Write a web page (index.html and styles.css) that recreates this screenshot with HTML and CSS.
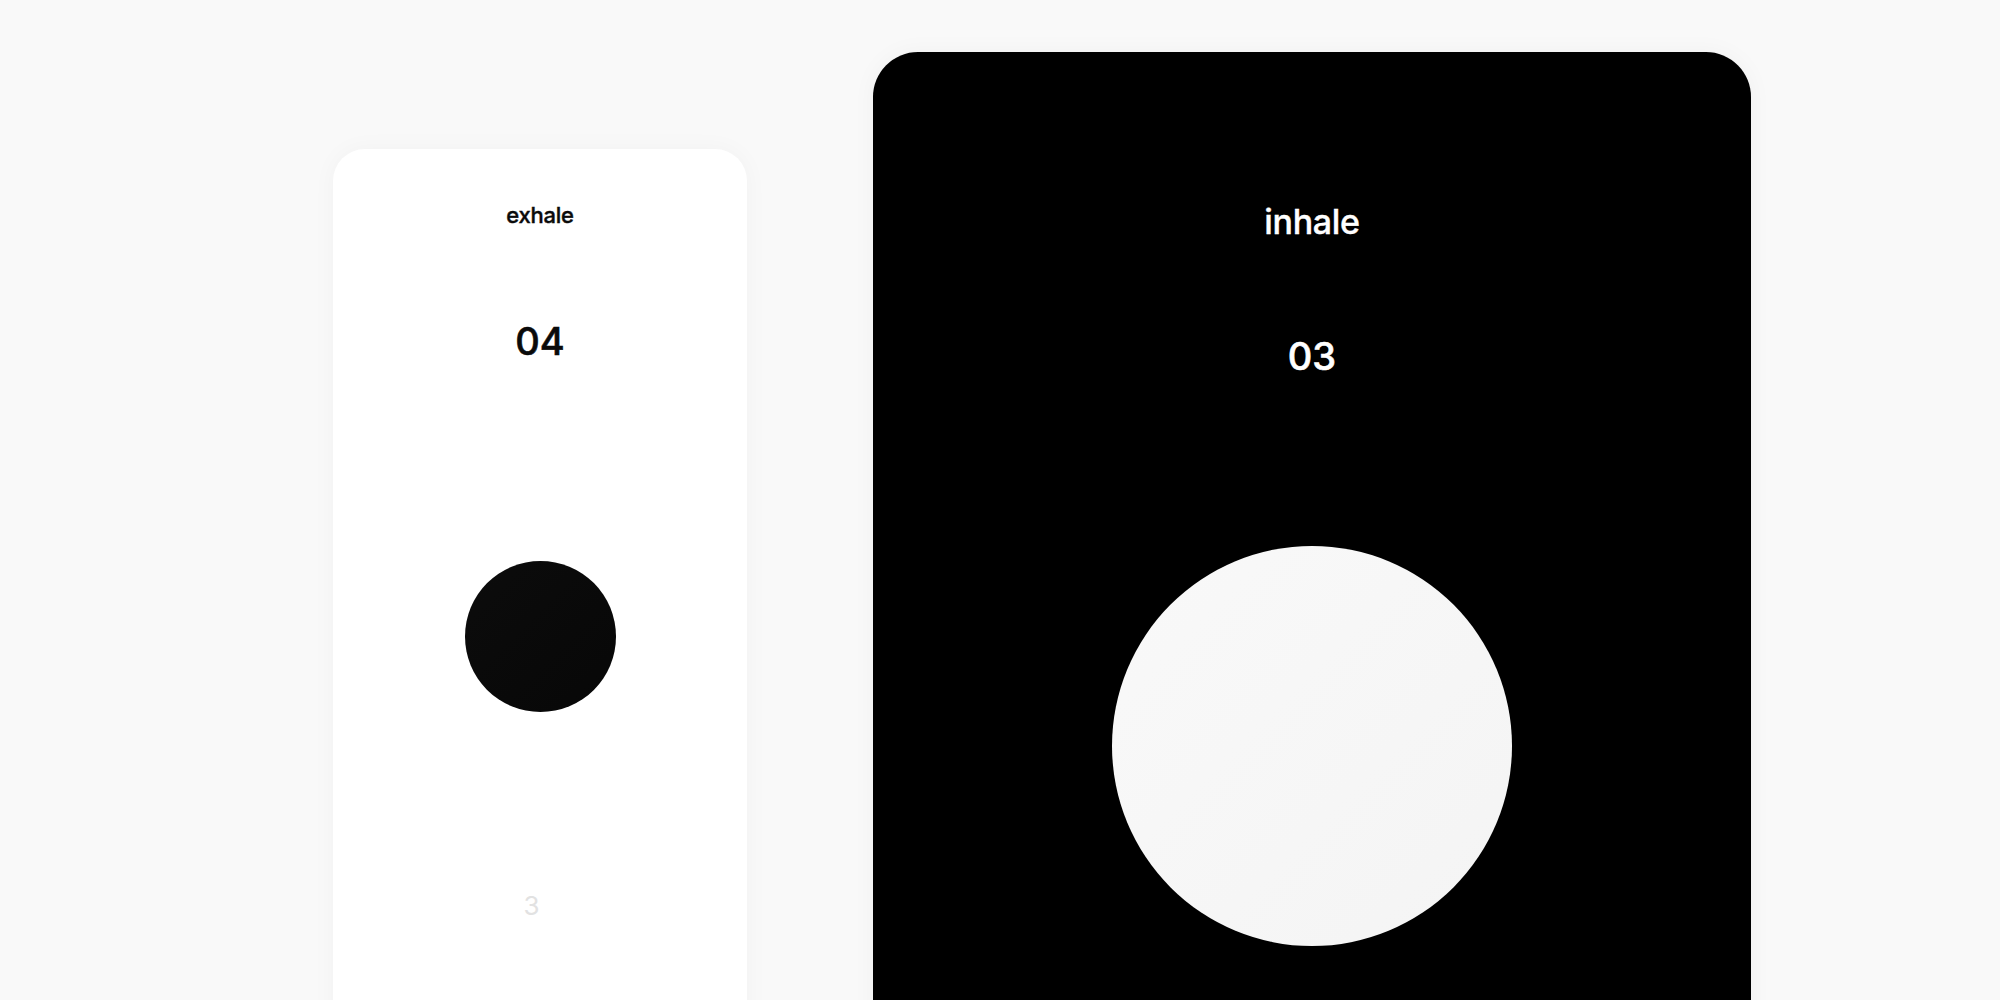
FILE: index.html
```html
<!DOCTYPE html>
<html lang="en">
<head>
<meta charset="utf-8">
<title>Breathe</title>
<link rel="stylesheet" href="styles.css">
</head>
<body>
<main class="stage">
  <section class="card card-light">
    <div class="label label-sm">exhale</div>
    <div class="count count-light">04</div>
    <div class="orb orb-dark"></div>
    <div class="ghost">3</div>
  </section>
  <section class="card card-dark">
    <div class="label label-lg">inhale</div>
    <div class="count count-dark">03</div>
    <div class="orb orb-light"></div>
  </section>
</main>
</body>
</html>
```

FILE: styles.css
```css
* { box-sizing: border-box; }
html, body {
  margin: 0;
  padding: 0;
  height: 1000px;
  overflow: hidden;
  background: #f9f9f9;
  font-family: Inter, "Liberation Sans", sans-serif;
}
.stage {
  display: flex;
  align-items: flex-start;
  gap: 126px;
  padding: 52px 0 0 333px;
}
.card {
  display: flex;
  flex-direction: column;
  align-items: center;
  flex: none;
}
.card-light {
  width: 414px;
  height: 1000px;
  margin-top: 97px;
  padding-top: 55px;
  background: #ffffff;
  border-radius: 32px;
  box-shadow: 0 0 24px rgba(0, 0, 0, 0.035);
}
.card-dark {
  width: 878px;
  height: 1100px;
  padding-top: 153px;
  background: #000000;
  border-radius: 45px;
  box-shadow: 0 0 24px rgba(0, 0, 0, 0.04);
}
.label {
  line-height: 1;
  font-weight: 500;
  letter-spacing: -0.01em;
  -webkit-text-stroke: 0.4px currentColor;
}
.label-sm {
  font-size: 22px;
  color: #0a0a0a;
}
.label-lg {
  font-size: 34px;
  color: #ffffff;
}
.count {
  font-size: 38px;
  line-height: 1;
  font-weight: 500;
  -webkit-text-stroke: 0.6px currentColor;
}
.count-light {
  margin-top: 96px;
  color: #0a0a0a;
}
.count-dark {
  margin-top: 98px;
  color: #ffffff;
}
.orb {
  border-radius: 50%;
  flex: none;
}
.orb-dark {
  width: 151px;
  height: 151px;
  margin-top: 201px;
  background: linear-gradient(135deg, #0c0c0c 0%, #070707 100%);
}
.orb-light {
  width: 400px;
  height: 400px;
  margin-top: 171px;
  background: linear-gradient(135deg, #f9f9f9 0%, #f4f4f4 100%);
}
.ghost {
  margin-top: 181px;
  margin-right: 17px;
  font-size: 26px;
  line-height: 1;
  font-weight: 400;
  color: #e2e2e2;
}
```
